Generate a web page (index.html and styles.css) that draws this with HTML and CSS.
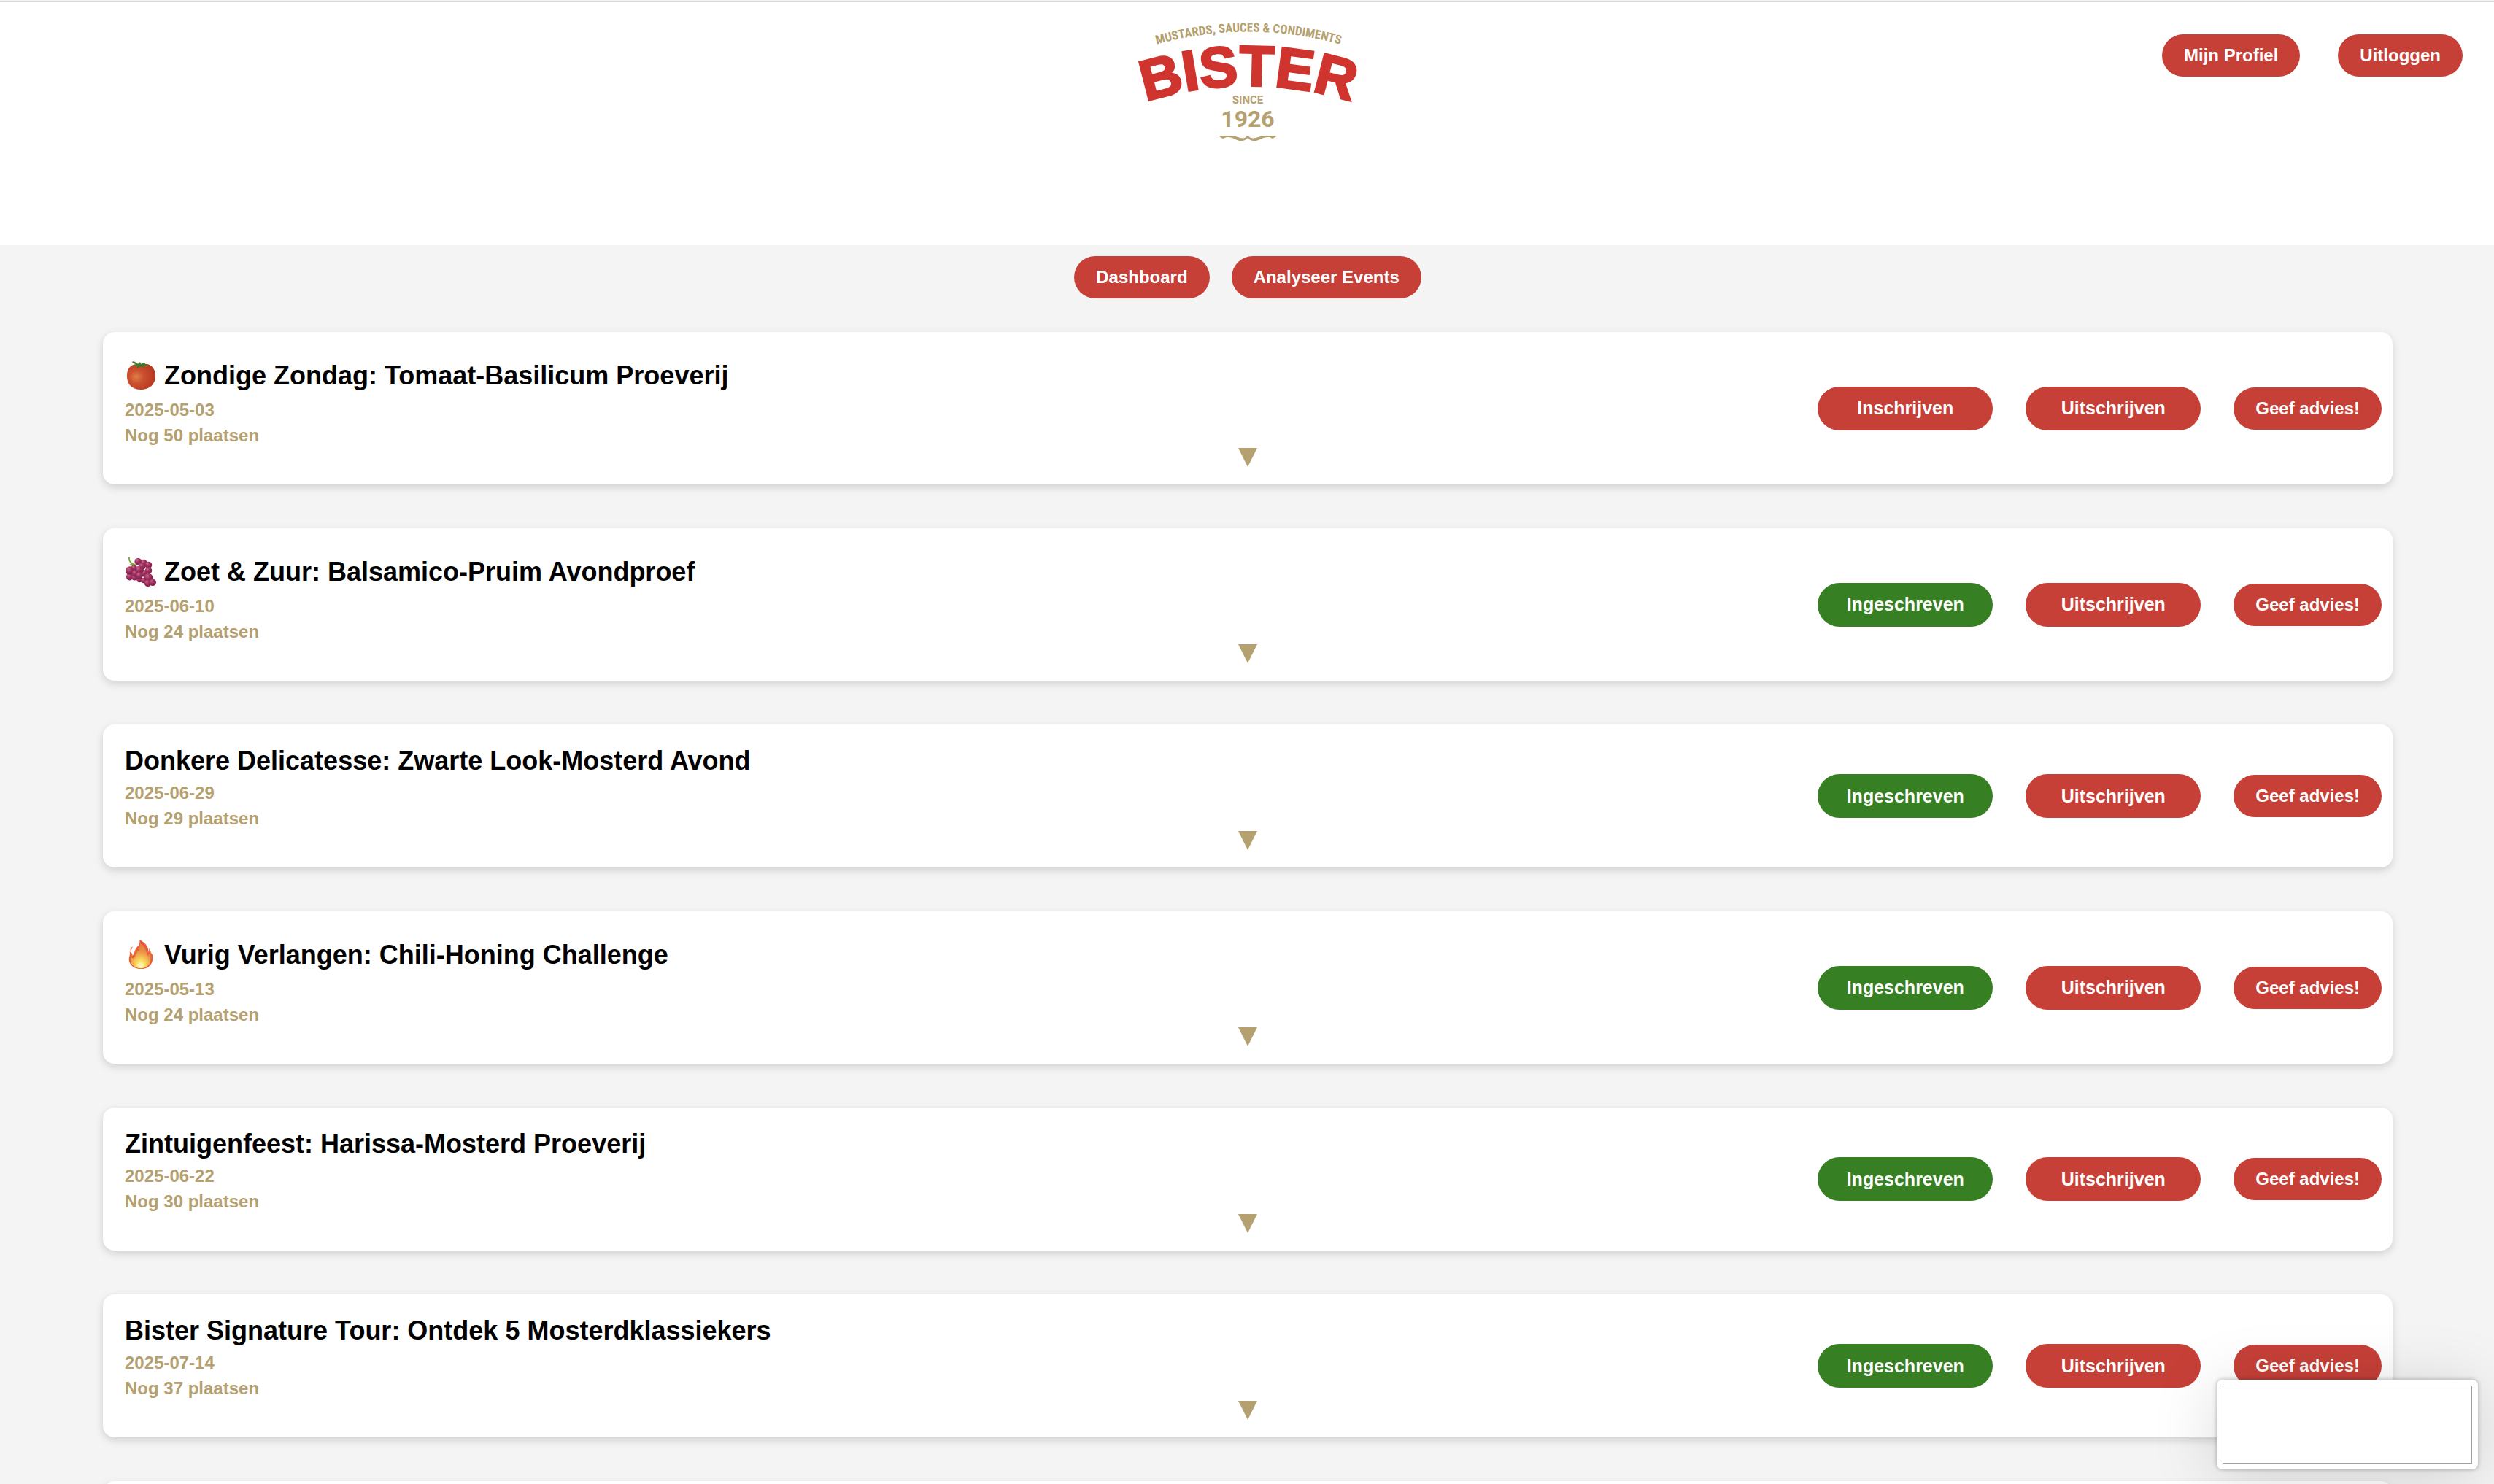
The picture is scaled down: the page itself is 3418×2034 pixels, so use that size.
FILE: index.html
```html
<!DOCTYPE html>
<html lang="nl">
<head>
<meta charset="utf-8">
<meta name="viewport" content="width=device-width, initial-scale=1">
<title>Bister Events</title>
<link rel="stylesheet" href="styles.css">
</head>
<body>
<div class="page">
  <header class="header">
    <a class="logo" href="#" aria-label="Bister">
      <svg width="304" height="176" viewBox="1558 24 304 176">
        <path id="arc-top" d="M1551 73 A464 464 0 0 1 1871 73" fill="none"/>
        <path id="arc-name" d="M1531 155 A460 460 0 0 1 1891 155" fill="none"/>
        <text class="logo-tagline"><textPath href="#arc-top" startOffset="50%">MUSTARDS, SAUCES &amp; CONDIMENTS</textPath></text>
        <text class="logo-name"><textPath href="#arc-name" startOffset="50%">BISTER</textPath></text>
        <text class="logo-since" x="1710" y="143">SINCE</text>
        <text class="logo-year" x="1710" y="175">1926</text>
        <path fill="#b5a06f" d="M1669 187 H1686 C1695 187 1700 192 1706 190 L1710 187 L1714 190 C1721 192 1726 187 1735 187 H1751 L1744 191 L1740 189 C1730 188 1727 194 1719 194 C1714 194 1712 192 1710 190 C1708 192 1706 194 1701 194 C1693 194 1690 188 1681 189 L1676 191 Z"/>
      </svg>
    </a>
    <nav class="account">
      <button class="btn" type="button">Mijn Profiel</button>
      <button class="btn" type="button">Uitloggen</button>
    </nav>
  </header>

  <nav class="tabs">
    <button class="btn" type="button">Dashboard</button>
    <button class="btn" type="button">Analyseer Events</button>
  </nav>

  <main class="events">
    <article class="card">
      <div class="info">
        <h2 class="title title-emoji">
          <svg class="emoji" viewBox="0 0 44 44" aria-hidden="true">
            <defs><radialGradient id="tomato" cx=".33" cy=".5" r=".75"><stop offset="0" stop-color="#dd8048"/><stop offset=".35" stop-color="#cc4f2e"/><stop offset="1" stop-color="#b03320"/></radialGradient></defs>
            <path fill="url(#tomato)" d="M22 6 C34 2 43 10 43 22 C43 35 34 42 22 42 C10 42 2 35 2 22 C2 9 11 3 22 6 Z"/>
            <path fill="#3f7a2c" d="M9 2 L12 1 L18 5 L21 2 L22 5 L30 3 L27 6 L35 8 L26 8 L28 11 L21 8 L16 12 L17 8 L10 9 L15 6 Z"/>
          </svg>
          <span>Zondige Zondag: Tomaat-Basilicum Proeverij</span>
        </h2>
        <p class="meta">2025-05-03</p>
        <p class="meta">Nog 50 plaatsen</p>
      </div>
      <button class="toggle" type="button" aria-label="Meer tonen"><svg width="26" height="26" viewBox="0 0 26 26"><path d="M0 0H26L13 26Z"/></svg></button>
      <div class="actions">
        <button class="btn btn-wide" type="button">Inschrijven</button>
        <button class="btn btn-wide" type="button">Uitschrijven</button>
        <button class="btn" type="button">Geef advies!</button>
      </div>
    </article>

    <article class="card">
      <div class="info">
        <h2 class="title title-emoji">
          <svg class="emoji" viewBox="0 0 44 44" aria-hidden="true">
            <defs><radialGradient id="grape" cx=".35" cy=".3" r=".8"><stop offset="0" stop-color="#c9668f"/><stop offset=".4" stop-color="#a0305f"/><stop offset="1" stop-color="#751c45"/></radialGradient></defs>
            <path fill="none" stroke="#7fa540" stroke-width="2" d="M5 1 C5 7 9 11 15 12 M6 12 L13 10"/>
            <g fill="url(#grape)">
              <circle cx="26" cy="9" r="5"/><circle cx="6" cy="29" r="5"/><circle cx="13" cy="30" r="4"/><circle cx="33" cy="12" r="5"/>
              <circle cx="18" cy="7" r="5"/><circle cx="12" cy="17" r="5"/><circle cx="24" cy="14" r="5"/><circle cx="33" cy="20" r="5"/>
              <circle cx="6" cy="20" r="6"/><circle cx="20" cy="33" r="4"/><circle cx="14" cy="24" r="5"/><circle cx="27" cy="24" r="5"/>
              <circle cx="20" cy="19" r="6"/><circle cx="20" cy="27" r="5"/><circle cx="26" cy="34" r="4"/><circle cx="33" cy="30" r="6"/>
              <circle cx="32" cy="38" r="5"/><circle cx="39" cy="37" r="5"/>
            </g>
          </svg>
          <span>Zoet &amp; Zuur: Balsamico-Pruim Avondproef</span>
        </h2>
        <p class="meta">2025-06-10</p>
        <p class="meta">Nog 24 plaatsen</p>
      </div>
      <button class="toggle" type="button" aria-label="Meer tonen"><svg width="26" height="26" viewBox="0 0 26 26"><path d="M0 0H26L13 26Z"/></svg></button>
      <div class="actions">
        <button class="btn btn-wide btn-joined" type="button">Ingeschreven</button>
        <button class="btn btn-wide" type="button">Uitschrijven</button>
        <button class="btn" type="button">Geef advies!</button>
      </div>
    </article>

    <article class="card">
      <div class="info">
        <h2 class="title">Donkere Delicatesse: Zwarte Look-Mosterd Avond</h2>
        <p class="meta">2025-06-29</p>
        <p class="meta">Nog 29 plaatsen</p>
      </div>
      <button class="toggle" type="button" aria-label="Meer tonen"><svg width="26" height="26" viewBox="0 0 26 26"><path d="M0 0H26L13 26Z"/></svg></button>
      <div class="actions">
        <button class="btn btn-wide btn-joined" type="button">Ingeschreven</button>
        <button class="btn btn-wide" type="button">Uitschrijven</button>
        <button class="btn" type="button">Geef advies!</button>
      </div>
    </article>

    <article class="card">
      <div class="info">
        <h2 class="title title-emoji">
          <svg class="emoji" viewBox="0 0 44 44" aria-hidden="true">
            <defs>
              <linearGradient id="flame" x1="0" y1="0" x2="0" y2="1"><stop offset="0" stop-color="#e4553a"/><stop offset=".5" stop-color="#e9653a"/><stop offset="1" stop-color="#e8502f"/></linearGradient>
              <radialGradient id="glow" cx=".5" cy=".9" r=".75"><stop offset="0" stop-color="#fffbd0"/><stop offset=".3" stop-color="#fbdc5e"/><stop offset=".75" stop-color="#ec9246"/><stop offset="1" stop-color="#e8803f"/></radialGradient>
            </defs>
            <path fill="url(#flame)" d="M20 0 C30 5 33 11 33 18 C34 16 34 14 33 12 C36 15 36 19 39 22 V28 C38 37 31 42 22 42 C12 42 5 36 5 28 C5 24 7 22 6 17 C9 18 10 20 10 23 C14 18 13 14 17 10 C20 7 21 4 20 0 Z"/>
            <path fill="#e4553a" d="M10 10 C10 13 8 13 8 17 C6 14 7 12 10 10 Z"/>
            <path fill="url(#glow)" d="M21 5 C28 10 30 16 31 23 C33 23 34 21 35 19 C39 32 33 41 22 41 C10 41 5 32 8 25 C10 27 12 27 13 26 C15 18 22 13 21 5 Z"/>
          </svg>
          <span>Vurig Verlangen: Chili-Honing Challenge</span>
        </h2>
        <p class="meta">2025-05-13</p>
        <p class="meta">Nog 24 plaatsen</p>
      </div>
      <button class="toggle" type="button" aria-label="Meer tonen"><svg width="26" height="26" viewBox="0 0 26 26"><path d="M0 0H26L13 26Z"/></svg></button>
      <div class="actions">
        <button class="btn btn-wide btn-joined" type="button">Ingeschreven</button>
        <button class="btn btn-wide" type="button">Uitschrijven</button>
        <button class="btn" type="button">Geef advies!</button>
      </div>
    </article>

    <article class="card">
      <div class="info">
        <h2 class="title">Zintuigenfeest: Harissa-Mosterd Proeverij</h2>
        <p class="meta">2025-06-22</p>
        <p class="meta">Nog 30 plaatsen</p>
      </div>
      <button class="toggle" type="button" aria-label="Meer tonen"><svg width="26" height="26" viewBox="0 0 26 26"><path d="M0 0H26L13 26Z"/></svg></button>
      <div class="actions">
        <button class="btn btn-wide btn-joined" type="button">Ingeschreven</button>
        <button class="btn btn-wide" type="button">Uitschrijven</button>
        <button class="btn" type="button">Geef advies!</button>
      </div>
    </article>

    <article class="card">
      <div class="info">
        <h2 class="title">Bister Signature Tour: Ontdek 5 Mosterdklassiekers</h2>
        <p class="meta">2025-07-14</p>
        <p class="meta">Nog 37 plaatsen</p>
      </div>
      <button class="toggle" type="button" aria-label="Meer tonen"><svg width="26" height="26" viewBox="0 0 26 26"><path d="M0 0H26L13 26Z"/></svg></button>
      <div class="actions">
        <button class="btn btn-wide btn-joined" type="button">Ingeschreven</button>
        <button class="btn btn-wide" type="button">Uitschrijven</button>
        <button class="btn" type="button">Geef advies!</button>
      </div>
    </article>

    <article class="card card-next"></article>
  </main>
</div>

<aside class="preview"><div class="preview-frame"></div></aside>
</body>
</html>
```
FILE: styles.css
```css
* {
  box-sizing: border-box;
}

body {
  margin: 0;
  background: #f4f4f4;
  font-family: "Liberation Sans", Arial, sans-serif;
  font-weight: bold;
}

.page {
  height: 100vh;
  overflow: hidden;
  border-top: 2px solid #f4f4f4;
}

.header {
  display: grid;
  grid-template-columns: 1fr auto 1fr;
  align-items: start;
  min-height: 334px;
  padding: 20px 43px 0 45px;
  background: #fff;
  border-top: 1px solid #d8d8d8;
}

.logo {
  grid-column: 2;
  display: block;
}

.logo svg {
  display: block;
  overflow: visible;
}

.logo text {
  text-anchor: middle;
  fill: #b5a06f;
}

.logo .logo-tagline {
  font: bold 17px "Liberation Sans Narrow", "Roboto Condensed", Roboto, sans-serif;
}

.logo .logo-name {
  font: bold 78px "Liberation Sans", Arial, sans-serif;
  fill: #d0342f;
  stroke: #d0342f;
  stroke-width: 3px;
}

.logo .logo-since {
  font: bold 15px Roboto, sans-serif;
}

.logo .logo-year {
  font: bold 32px Roboto, sans-serif;
}

.account {
  display: flex;
  justify-content: flex-end;
  gap: 52px;
  padding-top: 24px;
}

.tabs {
  display: flex;
  justify-content: center;
  gap: 30px;
  padding: 15px 0 46px 2px;
}

.btn {
  height: 58px;
  padding: 0 30px;
  border: 0;
  border-radius: 30px;
  background: #c64038;
  color: #fff;
  font: bold 24px "Liberation Sans", Arial, sans-serif;
  white-space: nowrap;
}

.btn-wide {
  width: 240px;
  height: 60px;
  padding: 0;
  font-size: 25px;
}

.btn-joined {
  background: #377f23;
}

.events {
  display: flex;
  flex-direction: column;
  gap: 60px;
  padding: 0 139px 0 141px;
}

.card {
  display: grid;
  grid-template-columns: 1fr auto 1fr;
  background: #fff;
  border-radius: 16px;
  box-shadow: 0 4px 12px rgba(0, 0, 0, 0.15);
}

.card-next {
  min-height: 196px;
}

.info {
  padding: 29px 0 50px 30px;
}

.title {
  margin: 0 0 5px;
  font-size: 36px;
  line-height: 42px;
  white-space: nowrap;
}

.title-emoji {
  display: flex;
  align-items: center;
  gap: 10px;
  padding: 10px 0 3px;
}

.emoji {
  width: 44px;
  height: 42px;
}

.meta {
  margin: 0;
  color: #b5a06f;
  font-size: 24px;
  line-height: 35px;
}

.toggle {
  align-self: end;
  margin: 0 0 24px;
  padding: 0;
  border: 0;
  background: none;
}

.toggle svg {
  display: block;
  fill: #b5a06f;
}

.actions {
  display: flex;
  align-items: center;
  justify-content: flex-end;
  gap: 45px;
  padding-right: 15px;
}

.preview {
  position: fixed;
  right: 22px;
  bottom: 20px;
  width: 358px;
  height: 123px;
  padding: 8px;
  background: #fff;
  border-radius: 8px;
  box-shadow: 0 0 6px rgba(0, 0, 0, 0.3), 0 10px 90px rgba(0, 0, 0, 0.15);
}

.preview-frame {
  height: 100%;
  border: 1px solid #a0a0a0;
}
```
